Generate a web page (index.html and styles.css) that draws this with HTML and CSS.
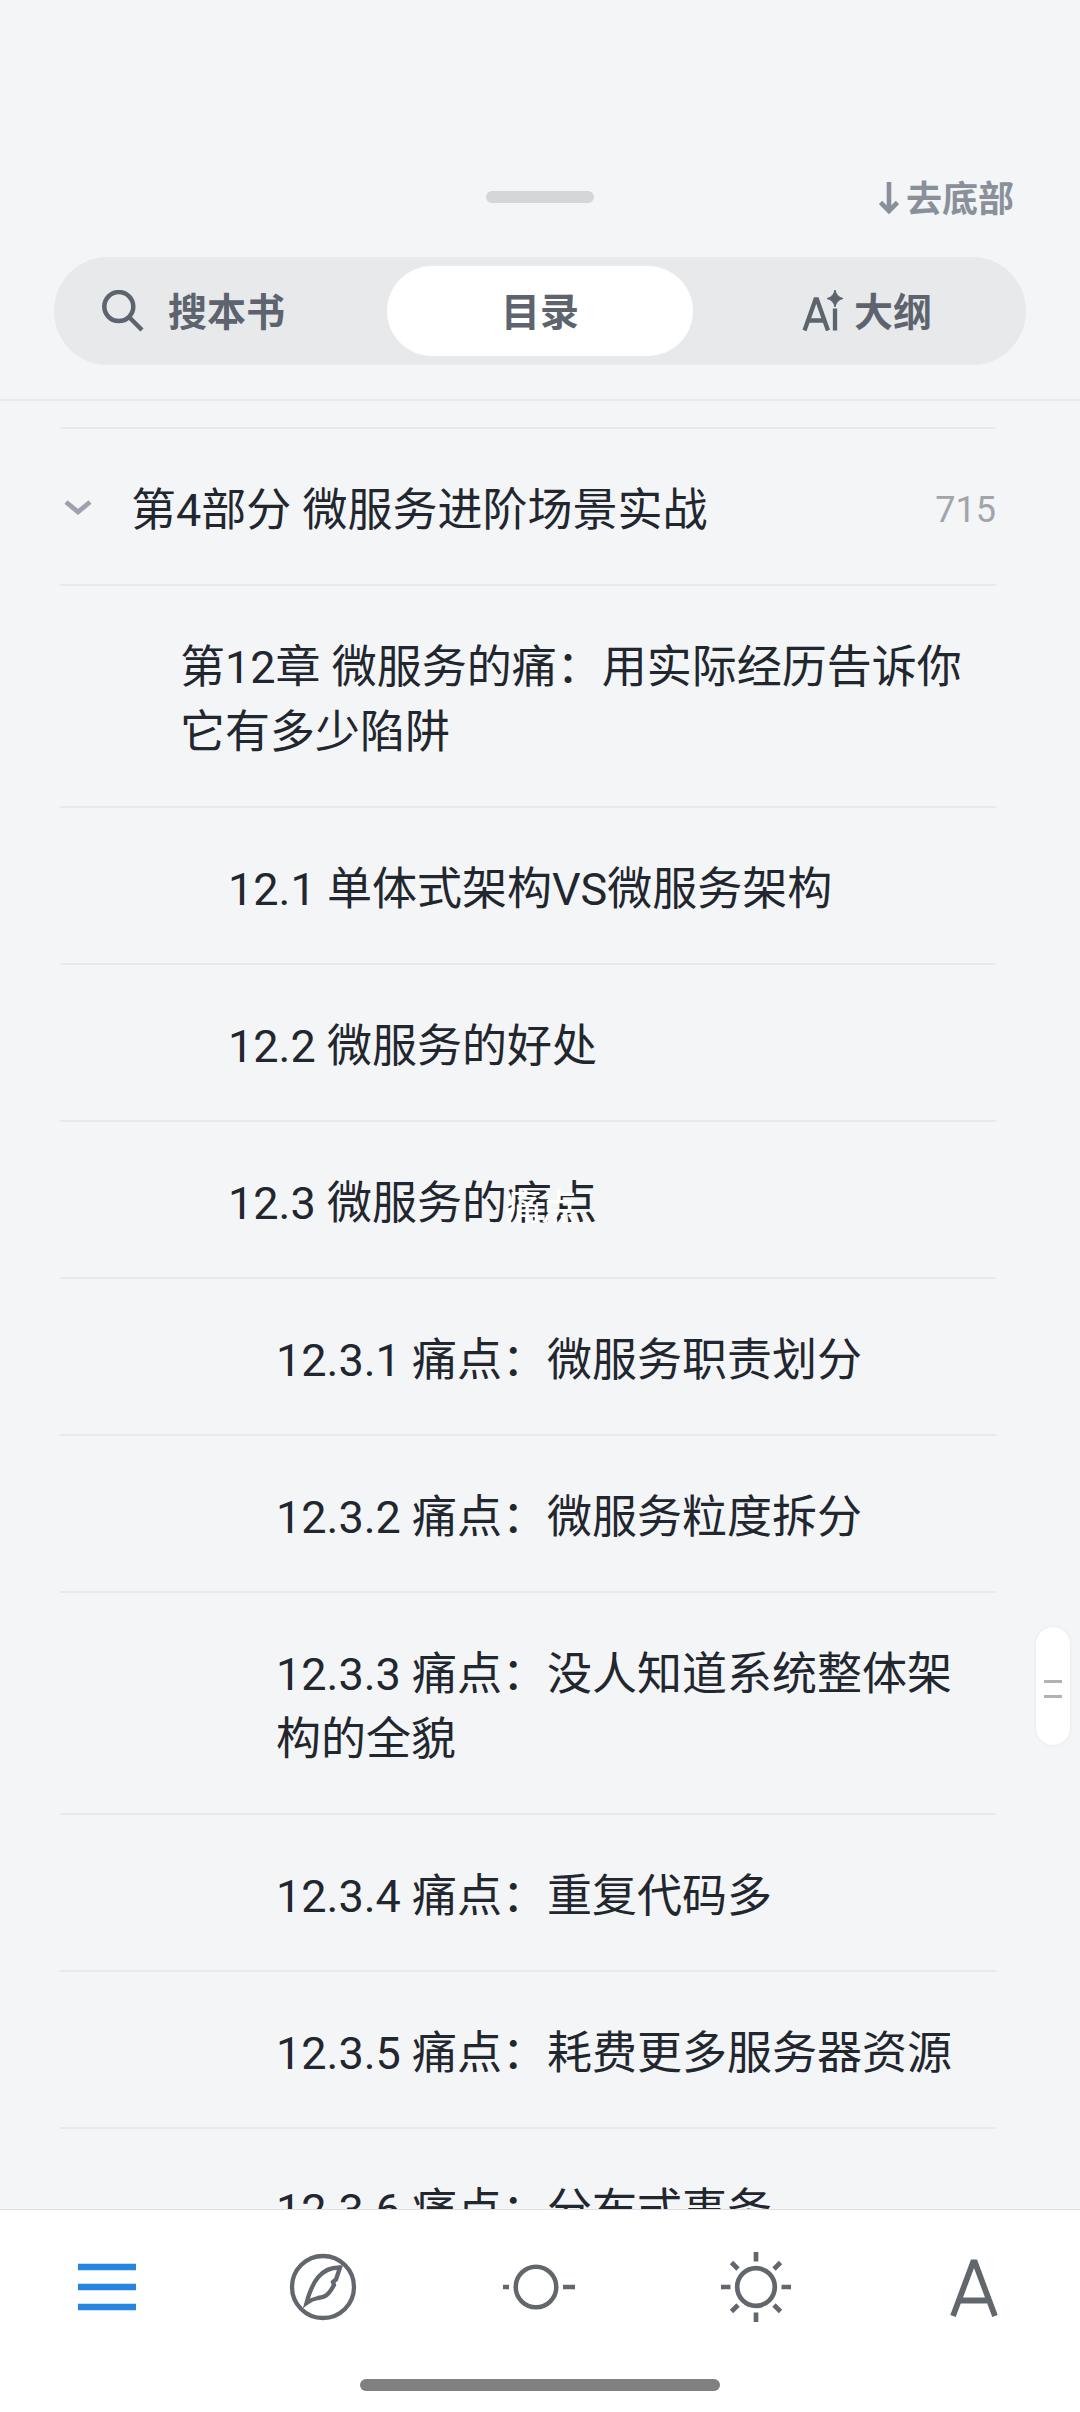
FILE: index.html
```html
<!DOCTYPE html>
<html lang="zh-CN">
<head>
<meta charset="utf-8">
<title>目录</title>
<link rel="stylesheet" href="styles.css">
</head>
<body>
<main class="screen">
  <header class="header">
    <div class="topbar">
      <span class="grabber"></span>
      <a class="to-bottom"><svg class="arrow" width="20" height="34" viewBox="0 0 20 34"><path d="M10 0V29M1.500 20.500L10 29L18.500 20.500" fill="none" stroke="currentColor" stroke-width="4.6"/></svg><span>去底部</span></a>
    </div>
    <nav class="segments">
      <a class="segment segment-search"><svg width="42" height="42" viewBox="0 0 42 42"><g fill="none" stroke="currentColor" stroke-width="4.5"><circle cx="16.8" cy="16.6" r="14.5"/><path d="M27 27L40 40"/></g></svg><span>搜本书</span></a>
      <a class="segment segment-active"><span>目录</span></a>
      <a class="segment segment-outline"><svg width="42" height="42" viewBox="0 0 42 42"><path d="M2.500 40.500L13.500 9.500H15L26 40.500M6.500 30.500H22M33 18.500V40.500" fill="none" stroke="currentColor" stroke-width="4.300"/><path d="M33 0Q34.500 7 41 8.500Q34.500 10 33 17Q31.500 10 25 8.500Q31.500 7 33 0Z" fill="currentColor" stroke="currentColor"/></svg><span>大纲</span></a>
    </nav>
  </header>
  <section class="toc">
    <div class="row level-0"><svg class="chevron" width="28" height="18" viewBox="0 0 28 18"><path d="M2 3L14 13L26 3" fill="none" stroke="currentColor" stroke-width="4.800"/></svg><span class="title">第4部分 微服务进阶场景实战</span><span class="page">715</span></div>
    <div class="row level-1"><span class="title">第12章 微服务的痛：用实际经历告诉你它有多少陷阱</span></div>
    <div class="row level-2"><span class="title">12.1 单体式架构VS微服务架构</span></div>
    <div class="row level-2"><span class="title">12.2 微服务的好处</span></div>
    <div class="row level-2"><span class="title">12.3 微服务的痛点</span><span class="toast">痛点</span></div>
    <div class="row level-3"><span class="title">12.3.1 痛点：微服务职责划分</span></div>
    <div class="row level-3"><span class="title">12.3.2 痛点：微服务粒度拆分</span></div>
    <div class="row level-3"><span class="title">12.3.3 痛点：没人知道系统整体架构的全貌</span></div>
    <div class="row level-3"><span class="title">12.3.4 痛点：重复代码多</span></div>
    <div class="row level-3"><span class="title">12.3.5 痛点：耗费更多服务器资源</span></div>
    <div class="row level-3"><span class="title">12.3.6 痛点：分布式事务</span></div>
  </section>
  <div class="scroll-thumb"><i></i><i></i></div>
  <footer class="footer">
    <nav class="tabs">
      <a class="tab tab-active"><svg width="80" height="80" viewBox="0 0 80 80"><path d="M11 20H69M11 40H69M11 60H69" fill="none" stroke="currentColor" stroke-width="6.400"/></svg></a>
      <a class="tab"><svg width="80" height="80" viewBox="0 0 80 80"><g fill="none" stroke="currentColor" stroke-width="4.300"><circle cx="40" cy="40" r="31"/><path d="M23.500 56C29 35 38 20 57 20.500L53 32.500L50 35L51 38C45 49 42 50 35 51Q29 52 23.500 56Z"/></g></svg></a>
      <a class="tab"><svg width="80" height="80" viewBox="0 0 80 80"><g fill="none" stroke="currentColor" stroke-width="4.500"><circle cx="40" cy="40" r="20.300"/><path d="M7 40H13M67 40H79"/></g></svg></a>
      <a class="tab"><svg width="80" height="80" viewBox="0 0 80 80"><g fill="none" stroke="currentColor" stroke-width="4.700"><circle cx="40" cy="40" r="18.800"/><path d="M40 5V14.500M40 65.500V75M5 40H14.500M65.500 40H75M15.500 15.500L22 22M58 58L64.500 64.500M15.500 64.500L22 58M58 22L64.500 15.500"/></g></svg></a>
      <a class="tab"><svg width="80" height="80" viewBox="0 0 80 80"><path d="M20 69L40 15.500H42L62 69M27 53.500H54" fill="none" stroke="currentColor" stroke-width="5.800"/></svg></a>
    </nav>
    <span class="home-bar"></span>
  </footer>
</main>
</body>
</html>
```
FILE: styles.css
```css
* { box-sizing: border-box; }
body { margin: 0; background: #f3f5f7; font-family: Roboto, "Noto Sans CJK SC", sans-serif; }
svg { display: block; flex: none; }
.screen { position: relative; display: flex; flex-direction: column; width: 1080px; height: 2412px; overflow: hidden; }
.header { flex: none; height: 401px; padding-top: 170px; border-bottom: 2px solid #e7e9eb; }
.topbar { display: grid; grid-template-columns: 1fr 108px 1fr; height: 87px; padding: 0 66px; }
.grabber { grid-column: 2; height: 12px; margin-top: 21px; border-radius: 6px; background: #d4d6d8; }
.to-bottom { display: flex; justify-content: flex-end; gap: 7px; height: 60px; line-height: 60px; font-size: 36px; font-weight: 700; color: #8a9099; }
.arrow { margin-top: 12px; }
.segments { display: grid; grid-template-columns: 324px 306px 324px; height: 108px; margin: 0 54px; padding: 9px; border-radius: 54px; background: #e7e9eb; }
.segment { display: flex; align-items: center; font-size: 39px; font-weight: 700; color: #5d646e; }
.segment span { padding-bottom: 4px; }
.segment-search { gap: 24px; padding-left: 39px; }
.segment-active { justify-content: center; border-radius: 45px; background: #fff; }
.segment-outline { gap: 10px; padding-left: 109px; }
.toc { flex: 1; min-height: 0; overflow: hidden; margin: 26px 84px 0 60px; border-top: 2px solid #e7e9eb; }
.row { position: relative; display: flex; padding: 49px 0 41px; border-bottom: 2px solid #e7e9eb; font-size: 45px; line-height: 65px; color: #22262e; }
.level-0 { padding-left: 4px; }
.chevron { margin: 21px 39px 0 0; color: #9fa2ac; }
.title { flex: 1; }
.page { font-size: 36px; color: #a1a4a9; }
.level-1 { padding-left: 120px; }
.level-2 { padding-left: 168px; }
.level-3 { padding-left: 216px; }
.toast { position: absolute; left: 445px; top: 66px; font-size: 36px; line-height: 40px; font-weight: 500; color: #fff; }
.scroll-thumb { position: absolute; left: 1036px; top: 1627px; width: 34px; height: 118px; display: flex; flex-direction: column; align-items: center; justify-content: center; gap: 12px; padding-top: 5px; border-radius: 17px; background: #fff; box-shadow: 0 0 3px #e2e4e6; }
.scroll-thumb i { width: 18px; height: 3px; background: #b2b2b2; }
.footer { flex: none; height: 203px; border-top: 1px solid #dcdedf; background: #fff; }
.tabs { display: grid; grid-template-columns: 216px 213px 220px 217px 80px; height: 169px; padding: 37px 0 0 67px; }
.tab { color: #62666d; }
.tab-active { color: #2585df; }
.home-bar { display: block; width: 360px; height: 12px; margin: 0 auto; border-radius: 6px; background: #808080; }
```
